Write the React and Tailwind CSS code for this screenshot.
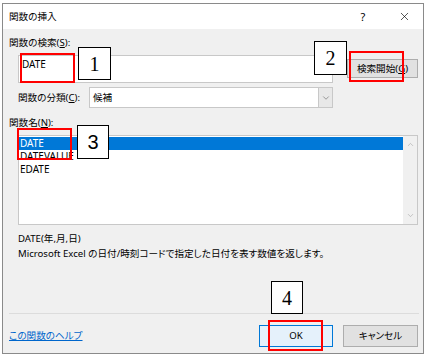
import { X, ChevronDown, ChevronUp } from "lucide-react";

const ui = { fontFamily: '"Noto Sans", "Noto Sans CJK JP", sans-serif' };

const Tag = ({ n, className, serif = true }) => (
  <div
    className={`absolute bg-white border border-black flex items-center justify-center text-[20px] text-black ${className}`}
    style={{ fontFamily: serif ? '"Liberation Serif", serif' : '"Liberation Sans", sans-serif' }}
  >
    {n}
  </div>
);

const RedBox = ({ className }) => (
  <div className={`absolute border-2 border-[#ff0000] ${className}`} />
);

export default function App() {
  return (
    <div className="relative w-[432px] h-[363px] bg-white overflow-hidden text-[9.6px] text-black leading-[14px] [font-feature-settings:'palt']" style={ui}>
      <div className="absolute left-[2px] top-[3px] w-[422px] h-[351px] border border-[#8a8a8a] bg-[#f0f0f0] flex flex-col">
        {/* title bar */}
        <div className="h-[25px] bg-white flex items-center pl-[6px] shrink-0">
          <span className="flex-1">関数の挿入</span>
          <span className="w-[20px] text-center mr-[25px] text-[11px]">?</span>
          <X className="w-[13px] h-[13px] mr-[12px]" strokeWidth={1.2} />
        </div>

        <div className="flex flex-col pl-[6px] pr-[5px]">
          <div className="mt-[7px] h-[14px] whitespace-nowrap">
            関数の検索(<span className="underline">S</span>):
          </div>

          <div className="flex items-start mt-[5px]">
            <div className="ml-[9px] w-[315px] h-[28px] bg-white border border-[#c8c8c8] px-[3px] pt-[1px] text-[10px]">
              DATE
            </div>
            <div className="ml-[14px] mt-[4px] w-[71px] h-[19px] bg-[#e1e1e1] border border-[#adadad] flex items-center justify-center whitespace-nowrap">
              検索開始(<span className="underline">G</span>)
            </div>
          </div>

          <div className="flex items-center mt-[4px] ml-[9px]">
            <span className="w-[71px] whitespace-nowrap">
              関数の分類(<span className="underline">C</span>):
            </span>
            <div className="w-[244px] h-[21px] bg-white border border-[#c8c8c8] flex items-center">
              <span className="flex-1 pl-[3px]">候補</span>
              <div className="w-[14px] h-full border-l border-[#c8c8c8] bg-[#e8e8e8] flex items-center justify-center">
                <ChevronDown className="w-[10px] h-[10px] text-[#666]" strokeWidth={1.5} />
              </div>
            </div>
          </div>

          <div className="mt-[8px] h-[14px] whitespace-nowrap">
            関数名(<span className="underline">N</span>):
          </div>

          <div className="ml-[9px] mt-[5px] w-[400px] h-[90px] bg-white border border-[#c8c8c8] flex">
            <div className="flex-1 pt-[1px] leading-[13px] text-[10px]">
              <div className="bg-[#0078d7] text-white pl-[1px]">DATE</div>
              <div className="pl-[1px]">DATEVALUE</div>
              <div className="pl-[1px]">EDATE</div>
            </div>
            <div className="w-[14px] bg-[#f0f0f0] flex flex-col justify-between items-center py-[4px]">
              <ChevronUp className="w-[9px] h-[9px] text-[#a0a0a0]" strokeWidth={1.5} />
              <ChevronDown className="w-[9px] h-[9px] text-[#a0a0a0]" strokeWidth={1.5} />
            </div>
          </div>

          <div className="ml-[9px] mt-[7px] h-[15px]">DATE(年,月,日)</div>
          <div className="ml-[9px] h-[15px] whitespace-nowrap">
            Microsoft Excel の日付/時刻コードで指定した日付を表す数値を返します。
          </div>

          <div className="mt-[51px] h-px w-[410px] bg-[#dcdcdc]" />

          <div className="flex items-center mt-[11px]">
            <a className="flex-1 text-[#0066cc] underline whitespace-nowrap">この関数のヘルプ</a>
            <div className="w-[74px] h-[22px] bg-[#e5f1fb] border border-[#0078d7] flex items-center justify-center">
              OK
            </div>
            <div className="ml-[10px] w-[75px] h-[22px] bg-[#e1e1e1] border border-[#adadad] flex items-center justify-center">
              キャンセル
            </div>
          </div>
        </div>
      </div>

      {/* annotations */}
      <RedBox className="left-[20px] top-[53px] w-[55px] h-[30px]" />
      <Tag n="1" className="left-[78px] top-[47px] w-[33px] h-[33px]" />
      <RedBox className="left-[349px] top-[51px] w-[55px] h-[31px]" />
      <Tag n="2" className="left-[314px] top-[41px] w-[33px] h-[34px]" />
      <RedBox className="left-[17px] top-[128px] w-[55px] h-[32px]" />
      <Tag n="3" serif={false} className="left-[77px] top-[125px] w-[32px] h-[34px]" />
      <RedBox className="left-[268px] top-[320px] w-[55px] h-[31px]" />
      <Tag n="4" className="left-[271px] top-[281px] w-[32px] h-[33px]" />
    </div>
  );
}
